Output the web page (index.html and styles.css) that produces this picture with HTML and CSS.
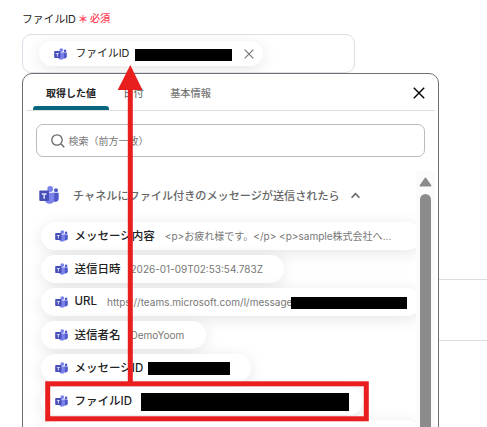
FILE: index.html
```html
<!DOCTYPE html>
<html lang="ja">
<head>
<meta charset="utf-8">
<title>ファイルID</title>
<link rel="stylesheet" href="styles.css">
</head>
<body>
<svg class="defs" aria-hidden="true">
  <symbol id="teams" viewBox="0 0 20 18">
    <circle cx="17" cy="4.200" r="2" fill="#5059c9"/>
    <path d="M14 6.800h5.200q.5 0 .5.700v5q0 3-3 3.300H14z" fill="#5059c9"/>
    <circle cx="11.200" cy="3" r="2.900" fill="#7b83eb"/>
    <path d="M6 6.800h9.200v6.400q0 4.300-4.700 4.600Q6 17.500 6 13z" fill="#7b83eb"/>
    <rect x=".3" y="4.500" width="9.700" height="10.500" rx="1" fill="#464eb8"/>
    <path d="M2.700 7.300h4.900v1.400H5.900v4H4.400v-4H2.700z" fill="#dfe1fa"/>
  </symbol>
</svg>
<main class="page">
  <div class="field-label"><span>ファイルID</span><span class="star">＊</span><span class="required">必須</span></div>
  <div class="field">
    <div class="chip selected">
      <svg class="icon"><use href="#teams"/></svg><span class="name">ファイルID</span><i class="mask mask-selected"></i>
      <svg class="remove" viewBox="0 0 10 10"><path d="M.7.7l8.600 8.600M9.300.7L.7 9.300"/></svg>
    </div>
  </div>
  <section class="panel">
    <nav class="tabs">
      <span class="tab active">取得した値</span><span class="tab date">日付</span><span class="tab basic">基本情報</span>
      <svg class="close" viewBox="0 0 12 12"><path d="M.8.8l10.400 10.400M11.200.8L.8 11.200"/></svg>
    </nav>
    <div class="search">
      <svg viewBox="0 0 14 14"><circle cx="6" cy="6" r="5.200"/><path d="M10 10l3.300 3.300"/></svg><span>検索（前方一致）</span>
    </div>
    <div class="results">
      <div class="list">
        <div class="heading"><svg class="icon-large"><use href="#teams"/></svg><span>チャネルにファイル付きのメッセージが送信されたら</span><svg class="chevron" viewBox="0 0 8 6"><path d="M.5 5L4 1.300 7.500 5"/></svg></div>
        <div class="chip w-full"><svg class="icon"><use href="#teams"/></svg><span class="name">メッセージ内容</span><span class="value message">&lt;p&gt;お疲れ様です。&lt;/p&gt; &lt;p&gt;sample株式会社へ...</span></div>
        <div class="chip w-date"><svg class="icon"><use href="#teams"/></svg><span class="name">送信日時</span><span class="value sent">2026-01-09T02:53:54.783Z</span></div>
        <div class="chip w-full"><svg class="icon"><use href="#teams"/></svg><span class="name">URL</span><span class="value url">https://teams.microsoft.com/l/message</span><i class="mask mask-url"></i></div>
        <div class="chip w-sender"><svg class="icon"><use href="#teams"/></svg><span class="name">送信者名</span><span class="value">DemoYoom</span></div>
        <div class="chip w-id"><svg class="icon"><use href="#teams"/></svg><span class="name">メッセージID</span><i class="mask mask-id"></i></div>
        <div class="chip w-file"><svg class="icon"><use href="#teams"/></svg><span class="name">ファイルID</span><i class="mask mask-file"></i></div>
        <div class="chip w-full"><svg class="icon"><use href="#teams"/></svg></div>
      </div>
      <div class="scrollbar"><svg viewBox="0 0 13 10"><path d="M6.500 1.300L11.700 8.700H1.300z"/></svg><i class="thumb"></i></div>
    </div>
  </section>
  <i class="rule rule-a"></i><i class="rule rule-b"></i>
  <svg class="annotation" viewBox="0 0 487 427"><path class="line" d="M130.300 384V86"/><path class="head" d="M130.300 65L142.500 90H117.700z"/><rect x="47.700" y="383.800" width="318.600" height="35"/></svg>
</main>
</body>
</html>
```

FILE: styles.css
```css
* { box-sizing: border-box; }
body { margin: 0; background: #fff; font-family: Inter, "Noto Sans CJK JP", sans-serif; color: #222; }
svg { display: block; flex: none; }
.defs { position: absolute; width: 0; height: 0; }
.page { position: relative; width: 487px; height: 427px; overflow: hidden; padding: 9px 0 0 22px; }
.field-label { display: flex; align-items: center; height: 17px; font-size: 10.800px; white-space: nowrap; }
.star { color: #ff4057; font-size: 10px; font-weight: 700; margin-left: 2px; width: 12px; padding-top: 2px; }
.required { color: #ff4057; font-size: 10.200px; font-weight: 500; }
.field { width: 333px; height: 39px; margin-top: 8px; padding: 6px 16px; border: 1px solid #dedee8; border-radius: 9px; overflow: hidden; }
.chip { display: flex; flex: none; align-items: center; height: 28px; padding-left: 14px; border-radius: 14px; background: #fff; box-shadow: 0 3px 16px rgba(0,0,0,.1); white-space: nowrap; }
.icon { width: 13px; height: 12px; margin-right: 6.500px; }
.name { font-size: 11.500px; font-weight: 500; padding-bottom: 2px; }
.selected { width: 224px; height: 25px; padding-left: 15px; }
.selected .icon { margin-right: 8.500px; }
.selected .name { font-size: 10.800px; font-weight: 400; width: 59px; padding-bottom: 4px; }
.mask { flex: none; background: #000; }
.mask-selected { width: 97px; height: 12px; margin-top: 3px; }
.remove { width: 10px; height: 10px; margin-left: 12px; fill: none; stroke: #777; stroke-width: 1.200; }
.panel { position: relative; width: 417px; height: 370px; padding: 0 3px; background: #fff; border: 1px solid #707070; border-radius: 10px 10px 0 0; }
.tabs { display: flex; height: 37px; border-bottom: 1px solid #ddd; padding-left: 7px; }
.tab { display: flex; align-items: center; justify-content: center; font-size: 10.200px; font-weight: 500; color: #777; }
.active { position: relative; width: 76px; color: #222; font-weight: 700; font-size: 10px; }
.active::after { content: ""; position: absolute; left: 0; right: 0; bottom: 0; height: 4px; border-radius: 3px 3px 0 0; background: #08677f; }
.date { margin-left: 14px; width: 21px; }
.basic { margin-left: 25px; width: 43px; }
.close { width: 12px; height: 12px; margin: 13px 0 0 201px; fill: none; stroke: #000; stroke-width: 1.400; }
.search { display: flex; align-items: center; width: 389px; height: 33px; margin: 13px 0 0 10px; padding-left: 14px; border: 1px solid #bbb; border-radius: 7px; font-size: 10px; color: #777; }
.search span { padding-bottom: 1px; }
.search svg { width: 14px; height: 14px; margin-right: 3.500px; fill: none; stroke: #666; stroke-width: 1.300; }
.results { display: flex; height: 256px; margin-top: 14px; }
.list { display: flex; flex-direction: column; gap: 5px; width: 390px; padding-left: 15px; overflow: hidden; }
.heading { display: flex; flex: none; align-items: center; height: 46px; padding-top: 2px; font-size: 11.130px; font-weight: 500; color: #666; white-space: nowrap; }
.heading span { padding-bottom: 1px; }
.icon-large { width: 20px; height: 18px; margin: 0 14px 0 -2px; }
.chevron { width: 9px; height: 7px; margin-left: 11px; fill: none; stroke: #666; stroke-width: 1.400; }
.value { font-size: 10px; color: #777; margin-left: 10px; padding-bottom: 1px; }
.message { font-size: 10.030px; }
.w-full { width: 380px; }
.w-date { width: 243px; }
.w-sender { width: 165px; }
.w-id { width: 210px; }
.w-file { width: 322px; }
.mask-url { width: 116px; height: 12px; margin-top: 2px; margin-left: -1px; }
.mask-id { width: 82px; height: 13px; margin-left: 5px; }
.mask-file { width: 208px; height: 18px; margin-top: 2px; margin-left: 9px; }
.scrollbar { width: 19px; background: #fbfbfb; padding: 6px 0 0 3px; }
.scrollbar svg { width: 13px; height: 10px; fill: #8b8b8b; stroke: #8b8b8b; stroke-width: 1.500; stroke-linejoin: round; }
.thumb { display: block; width: 11px; height: 240px; margin: 7px 0 0 1px; border-radius: 6px 6px 0 0; background: #8b8b8b; }
.rule { position: absolute; left: 439px; right: 0; height: 1px; background: #ddd; }
.rule-a { top: 279px; }
.rule-b { top: 340px; }
.annotation { position: absolute; left: 0; top: 0; width: 487px; height: 427px; fill: none; stroke: #e91e1e; stroke-width: 5; }
.annotation .head { fill: #e91e1e; stroke: none; }
```
